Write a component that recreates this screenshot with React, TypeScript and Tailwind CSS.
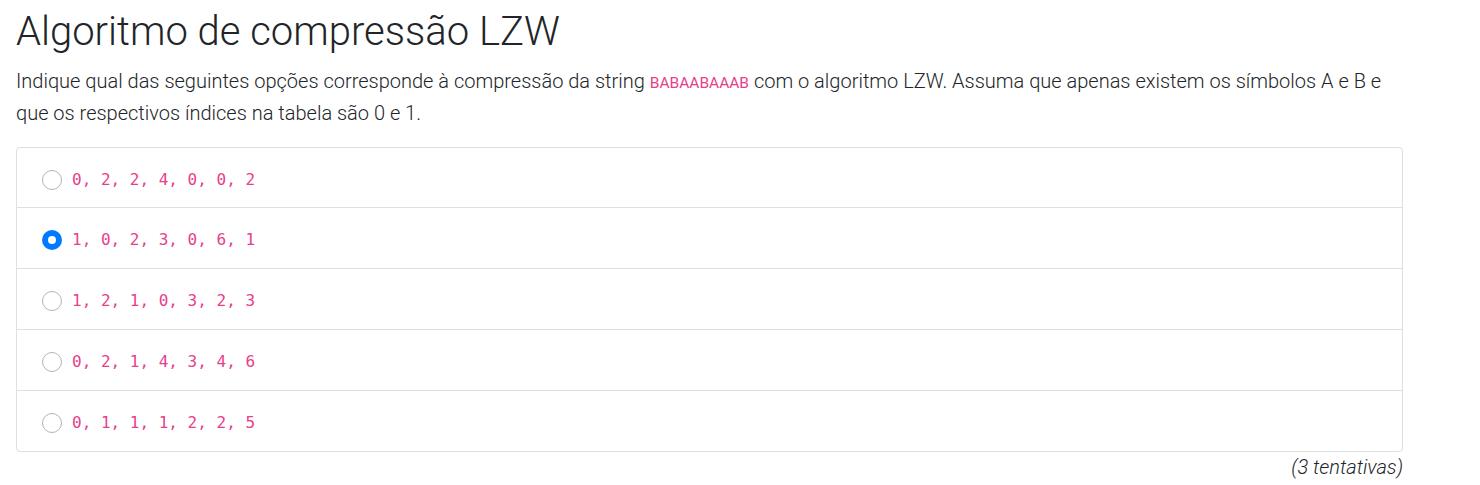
const options = [
  { value: "0, 2, 2, 4, 0, 0, 2", checked: false },
  { value: "1, 0, 2, 3, 0, 6, 1", checked: true },
  { value: "1, 2, 1, 0, 3, 2, 3", checked: false },
  { value: "0, 2, 1, 4, 3, 4, 6", checked: false },
  { value: "0, 1, 1, 1, 2, 2, 5", checked: false },
];

const Radio = ({ checked }: { checked: boolean }) =>
  checked ? (
    <span className="flex h-5 w-5 shrink-0 items-center justify-center rounded-full bg-[#007bff]">
      <span className="h-[8px] w-[8px] rounded-full bg-white" />
    </span>
  ) : (
    <span className="h-5 w-5 shrink-0 rounded-full border border-[#adb5bd] bg-white" />
  );

export default function App() {
  return (
    <div className="min-h-[485px] bg-white pl-4 pt-2 font-['Roboto',sans-serif] text-[#212529]">
      <div className="w-[1387px]">
        <h1 className="text-[40px] font-light leading-[48px]">
          Algoritmo de compressão LZW
        </h1>
        <p className="mt-[10px] text-[20px] font-light leading-[30px]">
          Indique qual das seguintes opções corresponde à compressão da string{" "}
          <code className="font-['Roboto',sans-serif] text-[15.5px] font-normal text-[#e83e8c]">
            BABAABAAAB
          </code>{" "}
          com o algoritmo LZW. Assuma que apenas existem os símbolos A e B e
          que os respectivos índices na tabela são 0 e 1.
        </p>
        <ul className="mt-[19px] rounded-[4px] border border-[rgba(0,0,0,0.125)]">
          {options.map((o, i) => (
            <li
              key={o.value}
              className={`flex items-center gap-[10px] pl-[25px] pt-1 ${
                i > 0 ? "h-[61px] border-t border-[rgba(0,0,0,0.125)]" : "h-[59px]"
              }`}
            >
              <Radio checked={o.checked} />
              <code className="font-['DejaVu_Sans_Mono',monospace] text-[16px] text-[#e83e8c]">
                {o.value}
              </code>
            </li>
          ))}
        </ul>
        <p className="text-right text-[20px] font-light italic leading-[30px]">
          (3 tentativas)
        </p>
      </div>
    </div>
  );
}
